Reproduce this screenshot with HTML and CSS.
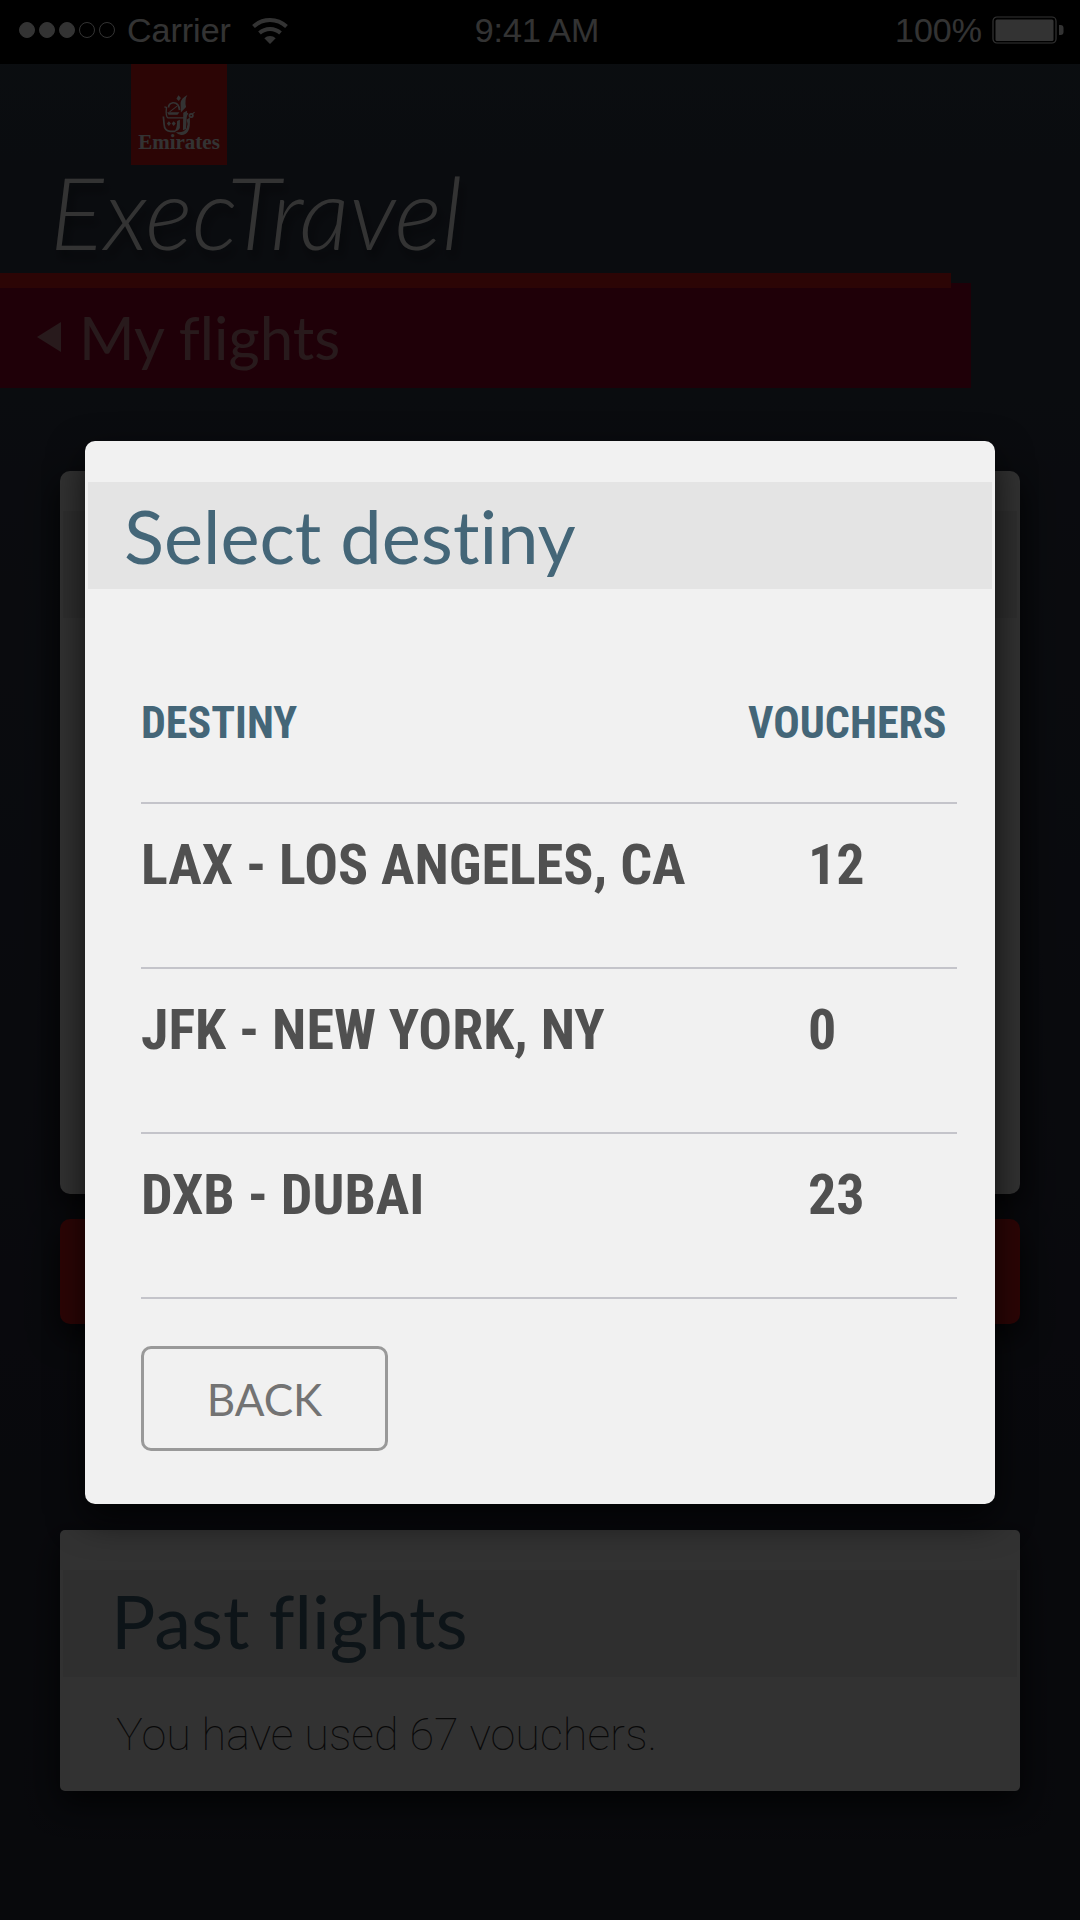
FILE: index.html
```html
<!DOCTYPE html>
<html lang="en">
<head>
<meta charset="utf-8">
<meta name="viewport" content="width=device-width, initial-scale=1">
<title>ExecTravel</title>
<link rel="stylesheet" href="styles.css">
</head>
<body>
<div class="page">
  <div class="status">
    <div class="status-left">
      <svg class="signal" viewBox="0 0 98 18" fill="#fff" stroke="#fff">
        <circle cx="9" cy="9" r="7.500"/><circle cx="29" cy="9" r="7.500"/><circle cx="49" cy="9" r="7.500"/>
        <circle cx="69" cy="9" r="7.500" fill="none"/><circle cx="89" cy="9" r="7.500" fill="none"/>
      </svg>
      <span>Carrier</span>
      <svg class="wifi" viewBox="0 0 36 27">
        <g fill="none" stroke="#fff" stroke-width="4">
          <path d="M1.500 9.500a24 24 0 0 1 33 0"/>
          <path d="M7.500 16a15.500 15.500 0 0 1 21 0"/>
        </g>
        <path fill="#fff" d="M18 27l-5.700-5.800a8.500 8.500 0 0 1 11.400 0z"/>
      </svg>
    </div>
    <span>9:41 AM</span>
    <div class="status-right">
      <span>100%</span>
      <svg class="battery" viewBox="0 0 72 28">
        <rect x="1" y="1" width="63" height="26" rx="4" fill="none" stroke="#fff" stroke-width="1.200"/>
        <rect x="3.500" y="3.500" width="58" height="21.500" rx="1.500" fill="#fff"/>
        <path fill="#fff" d="M67 9h1.500q3 0 3 3v4q0 3-3 3H67z"/>
      </svg>
    </div>
  </div>

  <header class="brand">
    <div class="logo">
      <svg class="emblem" viewBox="470 280 105 125" preserveAspectRatio="none">
        <g fill="#fff">
          <path d="M547 283q-18 9-20 24l1 28 15-16q-5-22 4-36z"/>
          <path d="M521 284l7 8-6 9-7-7z"/>
          <path d="M488 334h36l-6 8h-26z"/>
          <path d="M535 336l11-6-3 54-9 4z"/>
          <path d="M493 361l6 7-6 7-6-7zM507 361l6 7-6 7-6-7z"/>
          <path d="M517 360l8-3v24q-5 10-17 11 9-8 9-32z"/>
          <path d="M513 393q25 3 32-12 5-12 0-24l9-7q2 30-5 41-8 12-20 11-10-1-16-9z"/>
        </g>
        <g fill="none" stroke="#fff">
          <path d="M492 320q0-12 13-14 17-1 19 22" stroke-width="5"/>
          <path d="M495 333l22-17" stroke-width="3"/>
          <path d="M480 318l6 2q-3 28 4 31h50l8-14" stroke-width="4"/>
          <path d="M477 347l2 23q1 20 18 21h15" stroke-width="5"/>
          <circle cx="558" cy="344" r="5" stroke-width="5"/>
          <path d="M561 340l7-6" stroke-width="3"/>
        </g>
      </svg>
      <span class="logo-name">Emirates</span>
    </div>
    <div class="wordmark">ExecTravel</div>
  </header>

  <nav class="titlebar">
    <a class="title-link" href="#">
      <svg class="arrow" viewBox="0 0 24 30"><path d="M0 15L24 0v30z" fill="currentColor"/></svg>
      <span>My flights</span>
    </a>
  </nav>

  <main class="content">
    <section class="card card-flights"><div class="band"></div></section>
    <button class="action" type="button"></button>
    <section class="card card-past">
      <h2 class="band">Past flights</h2>
      <p class="note">You have used 67 vouchers.</p>
    </section>
  </main>

  <div class="backdrop">
    <section class="modal" role="dialog" aria-labelledby="modal-title">
      <h1 class="modal-title" id="modal-title">Select destiny</h1>
      <div class="modal-body">
        <table class="destinies">
          <thead>
            <tr><th scope="col">DESTINY</th><th class="count" scope="col">VOUCHERS</th></tr>
          </thead>
          <tbody>
            <tr><td>LAX - LOS ANGELES, CA</td><td class="count">12</td></tr>
            <tr><td>JFK - NEW YORK, NY</td><td class="count">0</td></tr>
            <tr><td>DXB - DUBAI</td><td class="count">23</td></tr>
          </tbody>
        </table>
        <button class="back" type="button">BACK</button>
      </div>
    </section>
  </div>
</div>
</body>
</html>
```
FILE: styles.css
```css
* {
  box-sizing: border-box;
}

body {
  margin: 0;
  background: #08090d;
}

.page {
  position: relative;
  min-height: 100vh;
  background: linear-gradient(#374150, #2d3040 70%, #282d3c);
  font-family: Lato, "Open Sans", sans-serif;
  font-variant-ligatures: none;
}

/* status bar */
.status {
  display: grid;
  grid-template-columns: 1fr auto 1fr;
  align-items: center;
  height: 64px;
  padding: 0 16px 4px 10px;
  background: #000;
  color: #fff;
  font: 34px/60px "Liberation Sans", Arial, sans-serif;
}

.status-left,
.status-right {
  display: flex;
  align-items: center;
}

.status-left {
  gap: 11px;
  padding-left: 8px;
}

.status-right {
  justify-content: flex-end;
  gap: 10px;
}

.signal {
  width: 98px;
  height: 18px;
}

.wifi {
  width: 36px;
  height: 27px;
  margin-left: 10px;
}

.battery {
  width: 72px;
  height: 28px;
}

/* brand */
.brand {
  height: 209px;
  padding-left: 50px;
}

.logo {
  display: flex;
  flex-direction: column;
  align-items: center;
  width: 96px;
  height: 101px;
  margin-left: 81px;
  padding-top: 30px;
  background: #dc1919;
  color: #fff;
}

.emblem {
  width: 36px;
  height: 42px;
}

.logo-name {
  font: bold 21px/20px "Liberation Serif", serif;
  margin-top: -4px;
}

.wordmark {
  color: #fff;
  font-size: 100px;
  font-style: italic;
  font-weight: 300;
  line-height: 92px;
  text-shadow: 4px 8px 8px rgba(0, 0, 0, 0.4);
}

/* title bar */
.titlebar {
  margin-right: 109px;
  padding-top: 10px;
  background:
    linear-gradient(#dc1919, #dc1919) 0 0 / calc(100% - 20px) 15px no-repeat,
    linear-gradient(#9b0028, #9b0028) 0 10px / 100% 105px no-repeat;
}

.title-link {
  display: flex;
  align-items: center;
  gap: 18px;
  height: 105px;
  padding: 2px 0 0 37px;
  color: #c8828c;
  font-size: 60px;
  line-height: 72px;
  text-decoration: none;
}

.arrow {
  width: 24px;
  height: 30px;
}

/* cards behind the dialog */
.content {
  padding: 83px 60px 129px;
}

.card {
  padding-top: 40px;
  background: #fafafa;
  box-shadow: 0 12px 30px rgba(0, 0, 0, 0.7);
}

.card-flights {
  min-height: 723px;
  border-radius: 10px;
}

.card-past {
  margin-top: 206px;
  min-height: 261px;
  border-radius: 5px;
}

.band {
  height: 107px;
  margin: 0 3px;
  padding-left: 48px;
  background: #e8e8e8;
  color: #446678;
  font-size: 74px;
  font-weight: 400;
  line-height: 102px;
}

.note {
  margin: 32px 0 0;
  padding-left: 56px;
  color: #303030;
  font: 100 45px/52px Roboto, sans-serif;
}

.action {
  display: block;
  width: 100%;
  height: 105px;
  margin-top: 25px;
  border: 0;
  border-radius: 10px;
  background: #dc1919;
  box-shadow: 0 12px 30px rgba(0, 0, 0, 0.7);
}

/* dialog */
.backdrop {
  position: absolute;
  inset: 0;
  padding: 441px 85px 0;
  background: rgba(0, 0, 0, 0.8);
}

.modal {
  padding: 41px 3px 53px;
  border-radius: 10px;
  background: #f1f1f1;
  box-shadow: 0 14px 36px rgba(0, 0, 0, 0.7);
}

.modal-title {
  margin: 0;
  padding-left: 36px;
  background: #e4e4e4;
  color: #446678;
  font-size: 74px;
  font-weight: 400;
  line-height: 107px;
}

.modal-body {
  padding: 55px 35px 0 53px;
}

.destinies {
  width: 100%;
  border-collapse: collapse;
  font-family: "Liberation Sans Narrow", "Roboto Condensed", "Liberation Sans", sans-serif;
  font-weight: 700;
  text-align: left;
}

.destinies th,
.destinies td {
  padding: 0;
  border-bottom: 2px solid #c4c4ca;
}

.destinies th {
  height: 159px;
  color: #446678;
  font-size: 44px;
}

.destinies td {
  height: 165px;
  padding-bottom: 42px;
  color: #505050;
  font-size: 56px;
}

.destinies .count {
  width: 209px;
}

.destinies td.count {
  padding-left: 60px;
}

.back {
  display: block;
  width: 247px;
  height: 105px;
  margin-top: 47px;
  border: 3px solid #999;
  border-radius: 10px;
  background: transparent;
  color: #737373;
  font: 400 44px/56px Lato, sans-serif;
}
```
